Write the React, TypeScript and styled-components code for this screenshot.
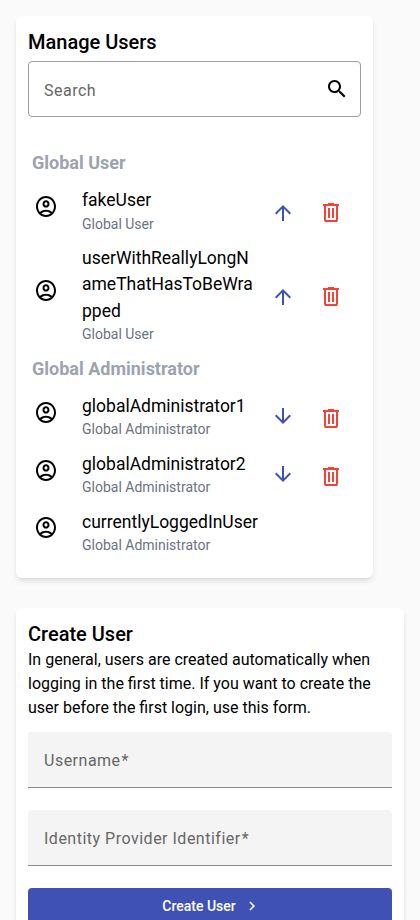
import React from "react";
import styled, { createGlobalStyle } from "styled-components";

const GlobalStyle = createGlobalStyle`
  *, *::before, *::after { box-sizing: border-box; }
  html, body { margin: 0; padding: 0; }
  body {
    background: #fafafa;
    color: #000;
    font-family: Roboto, "Helvetica Neue", sans-serif;
    font-size: 16px;
    line-height: 24px;
    height: 920px;
    overflow: hidden;
  }
`;

const Page = styled.main`
  display: flex;
  flex-direction: column;
  align-items: flex-start;
  gap: 30px;
  padding: 16px;
`;

const Card = styled.section<{ $width: number }>`
  width: ${(p) => p.$width}px;
  padding: 12px;
  border-radius: 6px;
  background: #fff;
  box-shadow: 0 4px 6px -1px rgba(0, 0, 0, 0.1), 0 2px 4px -2px rgba(0, 0, 0, 0.1);
`;

const Title = styled.h2`
  margin: 0;
  font-size: 20px;
  line-height: 28px;
  font-weight: 500;
`;

const SearchField = styled.label`
  display: flex;
  align-items: center;
  height: 56px;
  margin-top: 5px;
  padding: 0 11px 0 15px;
  border: 1px solid #9e9e9e;
  border-radius: 4px;
`;

const SearchInput = styled.input`
  flex: 1;
  min-width: 0;
  padding: 3px 0 0;
  border: 0;
  outline: 0;
  background: transparent;
  font: inherit;
  letter-spacing: 0.5px;
  &::placeholder { color: #666; opacity: 1; }
`;

const Groups = styled.div`
  height: 449px;
  padding: 32px 4px 0;
`;

const GroupTitle = styled.h3`
  margin: 0;
  height: 37px;
  padding-top: 1px;
  color: #9ca3af;
  font-size: 18px;
  line-height: 26px;
  font-weight: 700;
`;

const UserRow = styled.div<{ $actions: boolean }>`
  display: grid;
  grid-template-columns: ${(p) => (p.$actions ? "50px 172px 58px 38px" : "50px 1fr")};
  align-items: start;
  min-height: 58px;
  padding-bottom: 10.4px;
`;

const Avatar = styled.span<{ $top: number }>`
  display: flex;
  padding: ${(p) => p.$top}px 0 0 2px;
`;

const UserText = styled.div`
  padding-top: 1px;
  overflow-wrap: anywhere;
`;

const UserName = styled.div`
  font-size: 17.5px;
  line-height: 26.4px;
`;

const UserRole = styled.div`
  padding-top: 0.15px;
  color: #6b7280;
  font-size: 14px;
  line-height: 20px;
`;

const IconButton = styled.button<{ $top: number; $color: string }>`
  display: flex;
  padding: ${(p) => p.$top}px 0 0 17px;
  border: 0;
  background: none;
  color: ${(p) => p.$color};
`;

const DeleteButton = styled(IconButton)`
  padding-left: 7px;
`;

const Icon = styled.svg<{ $size?: number }>`
  display: block;
  flex: none;
  width: ${(p) => p.$size ?? 24}px;
  height: ${(p) => p.$size ?? 24}px;
  fill: currentColor;
`;

const Description = styled.p`
  margin: 0;
`;

const Form = styled.form`
  display: flex;
  flex-direction: column;
  gap: 22px;
  margin-top: 12px;
`;

const FilledField = styled.label`
  display: flex;
  align-items: center;
  height: 56px;
  padding: 2px 16px 0;
  border-bottom: 1px solid #8c8c8c;
  border-radius: 4px 4px 0 0;
  background: #f4f4f4;
  color: #666;
  letter-spacing: 0.5px;
`;

const RequiredMark = styled.span`
  margin-left: 1px;
`;

const FilledInput = styled.input`
  flex: 1;
  min-width: 0;
  padding: 0;
  border: 0;
  outline: 0;
  background: transparent;
  font: inherit;
`;

const SubmitButton = styled.button`
  display: flex;
  align-items: center;
  justify-content: center;
  gap: 7px;
  height: 36px;
  padding: 0 0 0 3px;
  border: 0;
  border-radius: 4px;
  background: #3f51b5;
  color: #fff;
  font: 500 14px/20px Roboto, sans-serif;
`;

const paths = {
  search:
    "M15.5 14h-.79l-.28-.27C15.41 12.59 16 11.11 16 9.5 16 5.91 13.09 3 9.5 3S3 5.91 3 9.5 5.91 16 9.5 16c1.61 0 3.09-.59 4.23-1.57l.27.28v.79l5 4.99L20.49 19l-4.99-5zm-6 0C7.01 14 5 11.99 5 9.5S7.01 5 9.5 5 14 7.01 14 9.5 11.99 14 9.5 14z",
  account:
    "M12 2C6.48 2 2 6.48 2 12s4.48 10 10 10 10-4.48 10-10S17.52 2 12 2zM7.35 18.5C8.66 17.56 10.26 17 12 17s3.34.56 4.65 1.5C15.34 19.44 13.74 20 12 20s-3.34-.56-4.65-1.5zm10.79-1.38C16.45 15.8 14.32 15 12 15s-4.45.8-6.14 2.12C4.7 15.73 4 13.95 4 12c0-4.42 3.58-8 8-8s8 3.58 8 8c0 1.95-.7 3.73-1.86 5.12zM12 6c-1.93 0-3.5 1.57-3.5 3.5S10.07 13 12 13s3.5-1.57 3.5-3.5S13.93 6 12 6zm0 5c-.83 0-1.5-.67-1.5-1.5S11.17 8 12 8s1.5.67 1.5 1.5S12.83 11 12 11z",
  up: "M4 12l1.41 1.41L11 7.83V20h2V7.83l5.58 5.59L20 12l-8-8-8 8z",
  down: "M20 12l-1.41-1.41L13 16.17V4h-2v12.17l-5.58-5.59L4 12l8 8 8-8z",
  trash:
    "M7 22q-.825 0-1.412-.587Q5 20.825 5 20V6H4V4h5V3h6v1h5v2h-1v14q0 .825-.587 1.413Q17.825 22 17 22zM17 6H7v14h10zM9 18h2V8H9zm4 0h2V8h-2z",
  chevron: "M10 6L8.59 7.41 13.17 12l-4.58 4.59L10 18l6-6z",
};

const Glyph = ({ name, size }: { name: keyof typeof paths; size?: number }) => (
  <Icon viewBox="0 0 24 24" $size={size} aria-hidden="true">
    <path d={paths[name]} transform={name === "account" ? "translate(0 -0.1) scale(1 1.05)" : undefined} />
  </Icon>
);

type User = {
  name: string;
  avatarTop: number;
  action?: { icon: "up" | "down"; top: number; trashTop: number };
};

const groups: { role: string; users: User[] }[] = [
  {
    role: "Global User",
    users: [
      { name: "fakeUser", avatarTop: 8, action: { icon: "up", top: 15, trashTop: 14 } },
      {
        name: "userWithReallyLongNameThatHasToBeWrapped",
        avatarTop: 34,
        action: { icon: "up", top: 41, trashTop: 40 },
      },
    ],
  },
  {
    role: "Global Administrator",
    users: [
      { name: "globalAdministrator1", avatarTop: 8, action: { icon: "down", top: 12, trashTop: 14 } },
      { name: "globalAdministrator2", avatarTop: 8, action: { icon: "down", top: 12, trashTop: 14 } },
      { name: "currentlyLoggedInUser", avatarTop: 7 },
    ],
  },
];

const fields = ["Username", "Identity Provider Identifier"];

export default function App() {
  return (
    <>
      <GlobalStyle />
      <Page>
        <Card $width={357}>
          <Title>Manage Users</Title>
          <SearchField>
            <SearchInput placeholder="Search" />
            <Glyph name="search" />
          </SearchField>
          <Groups>
            {groups.map((group) => (
              <div key={group.role}>
                <GroupTitle>{group.role}</GroupTitle>
                {group.users.map((user) => (
                  <UserRow key={user.name} $actions={!!user.action}>
                    <Avatar $top={user.avatarTop}>
                      <Glyph name="account" />
                    </Avatar>
                    <UserText>
                      <UserName>{user.name}</UserName>
                      <UserRole>{group.role}</UserRole>
                    </UserText>
                    {user.action && (
                      <>
                        <IconButton $color="#3f51b5" $top={user.action.top} aria-label="Change role">
                          <Glyph name={user.action.icon} />
                        </IconButton>
                        <DeleteButton $color="#f44336" $top={user.action.trashTop} aria-label="Delete user">
                          <Glyph name="trash" />
                        </DeleteButton>
                      </>
                    )}
                  </UserRow>
                ))}
              </div>
            ))}
          </Groups>
        </Card>
        <Card $width={388}>
          <Title>Create User</Title>
          <Description>
            In general, users are created automatically when logging in the first time. If you want to create the user
            before the first login, use this form.
          </Description>
          <Form>
            {fields.map((field) => (
              <FilledField key={field}>
                <span>{field}</span>
                <RequiredMark>*</RequiredMark>
                <FilledInput required />
              </FilledField>
            ))}
            <SubmitButton type="button">
              Create User
              <Glyph name="chevron" size={18} />
            </SubmitButton>
          </Form>
        </Card>
      </Page>
    </>
  );
}
